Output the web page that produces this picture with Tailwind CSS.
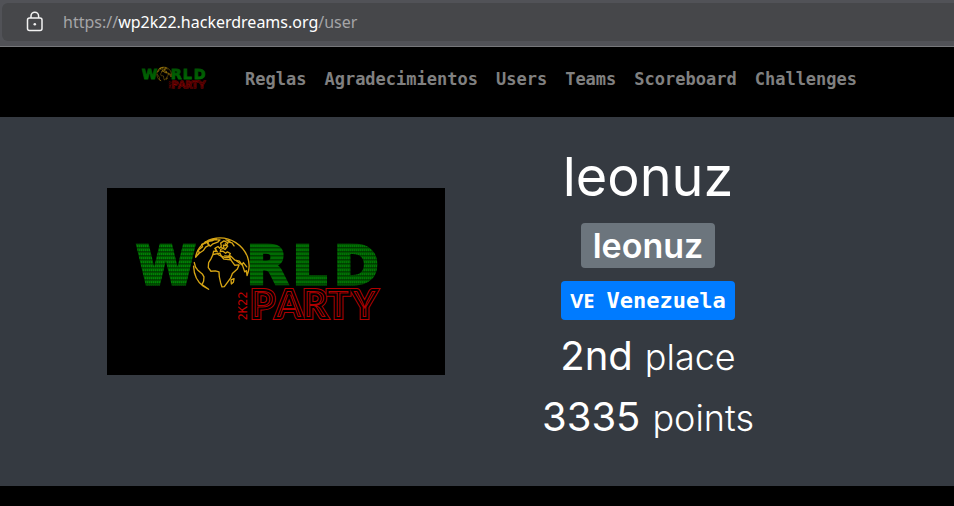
<!DOCTYPE html>
<html lang="es">
<head>
<meta charset="utf-8">
<meta name="viewport" content="width=device-width, initial-scale=1">
<title>World Party 2K22</title>
<script src="https://cdn.jsdelivr.net/npm/@tailwindcss/browser@4"></script>
</head>
<body class="min-h-screen bg-black text-white font-['Inter',sans-serif]">

<!-- Shared logo artwork -->
<svg class="absolute size-0" aria-hidden="true">
  <defs>
    <pattern id="mesh" width="2" height="4" patternUnits="userSpaceOnUse">
      <rect width="2" height="4" fill="#002800"/>
      <rect width="2" height="3" fill="#005a00"/>
      <rect y="1" width="1" height="2" fill="#008a06"/>
    </pattern>
    <symbol id="logo" viewBox="0 0 337 186">
      <g fill="url(#mesh)" stroke="url(#mesh)" stroke-width="3" font-family="DejaVu Sans" font-weight="700" font-size="54">
        <text x="29" y="96">W</text>
        <text x="139 185 226" y="96">RLD</text>
      </g>
      <g font-family="Lato" font-weight="900" font-size="38" stroke-linejoin="miter">
        <text x="143 168 195 219 244" y="130" fill="#000" stroke="#b00000" stroke-width="4">PARTY</text>
        <text x="143 168 195 219 244" y="130" fill="none" stroke="#000" stroke-width="2">PARTY</text>
      </g>
      <text transform="translate(140 132) rotate(-90)" font-family="DejaVu Sans Mono" font-size="12" fill="#c00000">2K22</text>
      <g transform="translate(12 37) scale(.3333)" fill="none" stroke="#d5a414" stroke-width="4" stroke-linejoin="round" stroke-linecap="round">
        <circle cx="306" cy="121" r="84" fill="#000" stroke="none"/>
        <path d="M229 96C234 66 258 43 291 39C335 34 371 61 384 94C389 108 391 124 387 138L383 151L381 136L376 140L369 119L361 114L350 106"/>
        <path d="M230 95L240 82L237 75L250 65L247 58L264 52L270 60L259 66L252 76L240 84ZM268 48L282 43L302 44L295 51L281 56L273 63L265 56ZM258 50L278 47L291 41"/>
        <path d="M225 112L229 126L235 134L249 146L254 155L253 168L248 178L268 192M223 123C224 148 236 171 252 183L268 192"/>
        <path d="M281 88L302 84L306 93L318 97L331 97L337 108L346 120L359 119L354 131L339 145L334 158L326 169L315 184L308 185L304 173L300 155L299 140L288 137L275 138L267 127L268 112L275 101Z"/>
        <path d="M335 164L344 160L342 171L336 176Z"/>
        <path d="M281 87L283 78L291 79L288 69L296 64L301 69L306 63L304 54L314 47L326 53L320 61L312 60L314 68L304 73L303 79L311 78L319 84L324 80L333 85L329 92L334 104L314 102L306 93L296 88"/>
        <path d="M307 67L317 73L325 63L318 56M326 50L338 53L344 62M320 44L332 48M333 92L347 105L360 108L368 119L372 112L382 125M316 92L332 94M287 70L294 80"/>
      </g>
    </symbol>
  </defs>
</svg>

<!-- Browser address bar -->
<div class="border-b border-[#77787b] bg-[#515257] pt-[3px] pb-[5px] pl-[2px]">
  <div class="flex h-[38px] items-center gap-[19px] rounded-l-md bg-[#46474a] pl-6">
    <svg class="h-[22px] w-[18px] shrink-0" viewBox="0 0 18 22" fill="none" stroke="#f2f2f2" stroke-width="1.5" aria-hidden="true">
      <rect x="1.5" y="7" width="14.5" height="12.5" rx="2"/>
      <path d="M5 7V5a3.8 3.8 0 0 1 7.600 0V7"/>
      <circle cx="8.800" cy="13.200" r="1.300" fill="#f2f2f2" stroke="none"/>
    </svg>
    <p class="text-[16px] leading-6 text-[#a5a5a7] font-['Noto_Sans',sans-serif]">https://<span class="text-white">wp2k22.hackerdreams.org</span>/user</p>
  </div>
</div>

<nav class="flex h-[70px] items-center bg-black pl-[134px] font-['DejaVu_Sans_Mono',monospace]">
  <a href="#" aria-label="World Party" class="mr-[22px] mb-2 shrink-0"><svg class="h-[49px] w-[89px]"><use href="#logo"/></svg></a>
  <ul class="mb-[6px] flex gap-[18px] text-[17px] leading-6 font-bold text-[#808080]">
    <li><a href="#">Reglas</a></li>
    <li><a href="#">Agradecimientos</a></li>
    <li><a href="#">Users</a></li>
    <li><a href="#">Teams</a></li>
    <li><a href="#">Scoreboard</a></li>
    <li><a href="#">Challenges</a></li>
  </ul>
</nav>

<main class="bg-[#353a41] pt-7 pr-[30px] pb-11">
  <div class="mx-auto grid max-w-[744px] grid-cols-2 items-center">
    <div class="px-[17px] pb-6">
      <svg class="aspect-[337/186] w-full bg-black" role="img" aria-label="World Party 2K22"><use href="#logo"/></svg>
    </div>
    <div class="flex flex-col items-center">
      <h1 class="text-[54px] leading-[64px]">leonuz</h1>
      <h2 class="mt-[14px] rounded bg-[#6c757d] px-3 text-[34px] leading-[45px] font-semibold">leonuz</h2>
      <h2 class="mt-[13px] flex items-center gap-3 rounded bg-[#007bff] px-[9px] text-[22px] leading-[39px] font-bold font-['DejaVu_Sans_Mono',monospace]">
        <span class="text-[20px] font-['Open_Sans',sans-serif]">VE</span>
        <span>Venezuela</span>
      </h2>
      <h2 class="mt-3 flex items-baseline gap-3 text-[40px] leading-[48px]">2nd <small class="text-[36px] font-light">place</small></h2>
      <h2 class="mt-3 flex items-baseline gap-3 text-[40px] leading-[48px]">3335 <small class="text-[36px] font-light">points</small></h2>
    </div>
  </div>
</main>
</body>
</html>
